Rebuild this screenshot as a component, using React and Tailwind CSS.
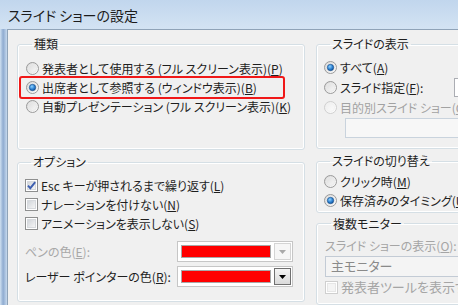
import React from "react";

const font = "font-['Noto_Sans_CJK_JP','Noto_Sans',sans-serif] [font-feature-settings:'palt']";

const Radio = ({ checked = false, disabled = false }) => (
  <svg width="13" height="13" viewBox="0 0 13 13" className="shrink-0">
    <defs>
      <linearGradient id={disabled ? "rOffD" : "rOff"} x1="0" y1="0" x2="1" y2="1">
        <stop offset="0" stopColor={disabled ? "#ececec" : "#d6d6d6"} />
        <stop offset="1" stopColor="#ffffff" />
      </linearGradient>
      <radialGradient id="rOn" cx="0.4" cy="0.35" r="0.7">
        <stop offset="0" stopColor="#8fd3ff" />
        <stop offset="0.6" stopColor="#2b7fd0" />
        <stop offset="1" stopColor="#0d4f95" />
      </radialGradient>
    </defs>
    <circle cx="6.5" cy="6.5" r="6" fill={disabled ? "url(#rOffD)" : "url(#rOff)"} stroke={disabled ? "#cfcfcf" : "#9a9a9a"} />
    <circle cx="6.5" cy="6.5" r="4" fill="none" stroke={disabled ? "#f2f2f2" : "#e9e9e9"} />
    {checked && <circle cx="6.5" cy="6.5" r="3.2" fill="url(#rOn)" stroke="#174c86" strokeWidth="0.6" />}
  </svg>
);

const Check = ({ checked = false, disabled = false }) => (
  <svg width="13" height="13" viewBox="0 0 13 13" className="shrink-0">
    <defs>
      <linearGradient id="cIn" x1="0" y1="0" x2="1" y2="1">
        <stop offset="0" stopColor="#cfd3d8" />
        <stop offset="1" stopColor="#f7f7f7" />
      </linearGradient>
    </defs>
    <rect x="0.5" y="0.5" width="12" height="12" fill="#fff" stroke={disabled ? "#cfcfcf" : "#8e8f8f"} />
    <rect x="2.5" y="2.5" width="8" height="8" fill={disabled ? "#f4f4f4" : "url(#cIn)"} stroke={disabled ? "#e6e6e6" : "#d6d9dd"} />
    {checked && <path d="M3 6.6 L5.3 9.2 L10.2 3.2" fill="none" stroke="#3d5fb0" strokeWidth="1.9" />}
  </svg>
);

const Group = ({ title, className, children }) => (
  <fieldset className={`border border-[#d5dfe5] rounded-[3px] shadow-[inset_0_0_0_1px_#fff] ${className}`}>
    <legend className="ml-[6px] px-[2px] text-[12px] leading-[16px] text-[#1e1e1e]">{title}</legend>
    {children}
  </fieldset>
);

const Option = ({ children, mark, gray = false }) => (
  <div className={`flex items-center gap-[3px] h-[19px] whitespace-nowrap ${gray ? "text-[#a2a2a2]" : ""}`}>
    {mark}
    <span>{children}</span>
  </div>
);

const ColorPicker = ({ disabled = false }) => (
  <div className="flex items-center w-[116px] h-[21px] border border-[#c6c6c6] bg-white pl-[3px] pr-[1px] gap-[3px]">
    <div className="flex-1 h-[13px] bg-[#ff0000] border border-[#a8a8a8]" />
    <div
      className={`w-[17px] h-[17px] flex items-center justify-center border ${
        disabled ? "border-[#d4d4d4] bg-[#f6f6f6]" : "border-[#707070] bg-[linear-gradient(to_bottom,#f4f4f4,#dadada)]"
      }`}
    >
      <svg width="7" height="4" viewBox="0 0 7 4">
        <path d="M0 0 H7 L3.5 4 Z" fill={disabled ? "#a9a9a9" : "#000"} />
      </svg>
    </div>
  </div>
);

const App = () => {
  return (
    <div className={`w-[458px] h-[305px] overflow-hidden flex flex-col bg-[#c9dcef] text-[12px] text-[#1e1e1e] ${font}`}>
      <div className="h-[29px] shrink-0 pl-[8px] pt-[6px] bg-[linear-gradient(to_bottom,#c1d6ed,#d3e3f3)] text-[14px] leading-[18px] text-[#1b1b1b]">
        スライド ショーの設定
      </div>
      <div className="flex flex-1 min-h-0">
        <div className="w-[7px] shrink-0 bg-[linear-gradient(to_right,#cfe0f1,#8fabd0_45%,#c6d9ee)]" />
        <div className="flex-1 min-w-0 bg-[#f0f0f0] border-l border-t border-[#8fa3b8] pl-[9px] pt-[6px] flex gap-[11px] overflow-hidden leading-[16px]">
          {/* left column */}
          <div className="w-[288px] shrink-0 flex flex-col gap-[4px]">
            <Group title="種類" className="h-[114px] pl-[8px] pt-[7px]">
              <Option mark={<Radio />}>発表者として使用する (フル スクリーン表示)(<u>P</u>)</Option>
              <div className="-ml-[7px] -my-[2px] w-[266px] h-[23px] pl-[5px] border-2 border-[#f01818] rounded-[3px] flex items-center">
                <Option mark={<Radio checked />}>出席者として参照する (ウィンドウ表示)(<u>B</u>)</Option>
              </div>
              <Option mark={<Radio />}>自動プレゼンテーション (フル スクリーン表示)(<u>K</u>)</Option>
            </Group>
            <Group title="オプション" className="h-[148px] pl-[7px] pt-[6px]">
              <Option mark={<Check checked />}>Esc キーが押されるまで繰り返す(<u>L</u>)</Option>
              <Option mark={<Check />}>ナレーションを付けない(<u>N</u>)</Option>
              <Option mark={<Check />}>アニメーションを表示しない(<u>S</u>)</Option>
              <div className="flex items-center mt-[8px]">
                <span className="w-[152px] text-[#a8a8a8]">ペンの色(<u>E</u>):</span>
                <ColorPicker disabled />
              </div>
              <div className="flex items-center mt-[4px]">
                <span className="w-[152px]">レーザー ポインターの色(<u>R</u>):</span>
                <ColorPicker />
              </div>
            </Group>
          </div>
          {/* right column */}
          <div className="w-[170px] shrink-0 flex flex-col">
            <Group title="スライドの表示" className="h-[114px] pl-[7px] pt-[6px]">
              <Option mark={<Radio checked />}>すべて(<u>A</u>)</Option>
              <div className="flex items-center h-[21px] gap-[3px] whitespace-nowrap">
                <Radio />
                <span>スライド指定(<u>F</u>):</span>
                <div className="ml-[28px] w-[40px] h-[19px] border border-[#abadb3] bg-white" />
              </div>
              <Option mark={<Radio disabled />} gray>目的別スライド ショー(<u>C</u>):</Option>
              <div className="ml-[21px] mt-[1px] w-[160px] h-[20px] border border-[#c9d3dd] bg-[#f7f7f7]" />
            </Group>
            <Group title="スライドの切り替え" className="h-[60px] mt-[4px] pl-[7px] pt-[3px]">
              <Option mark={<Radio />}>クリック時(<u>M</u>)</Option>
              <Option mark={<Radio checked />}>保存済みのタイミング(<u>U</u>)</Option>
            </Group>
            <Group title="複数モニター" className="h-[90px] mt-[3px] pl-[8px] pt-[6px]">
              <div className="h-[16px] text-[#a5a5a5] whitespace-nowrap">スライド ショーの表示(<u>O</u>):</div>
              <div className="mt-[2px] w-[170px] h-[21px] border border-[#c3cbd5] bg-[#f4f4f4] pl-[5px] flex items-center text-[#8a8a8a] text-[13px]">
                主モニター
              </div>
              <div className="flex items-center gap-[3px] h-[19px] mt-[1px] whitespace-nowrap text-[#a5a5a5] text-[13px]">
                <Check disabled />
                <span>発表者ツールを表示する</span>
              </div>
            </Group>
          </div>
        </div>
      </div>
    </div>
  );
};

export default App;
